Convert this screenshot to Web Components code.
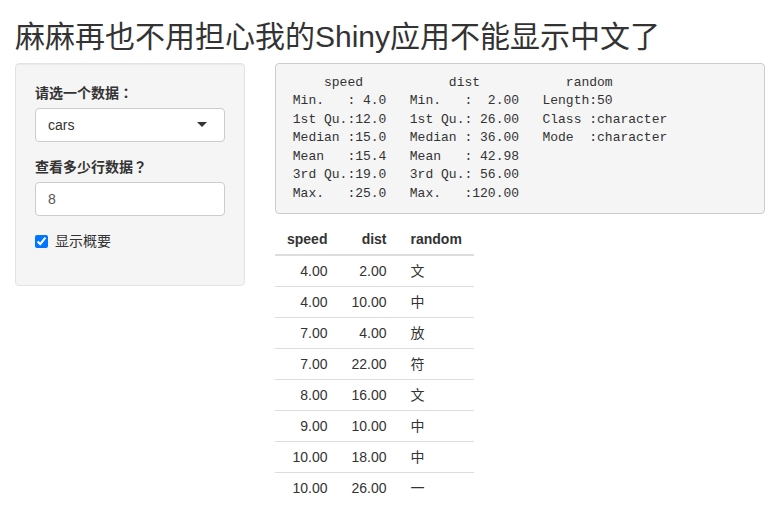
<!DOCTYPE html>
<html lang="zh-CN">
<head>
<meta charset="utf-8">
<title>麻麻再也不用担心我的Shiny应用不能显示中文了</title>
<style>
body { margin: 0; background: #fff; color: #333; font: 14px/20px "Liberation Sans", "Noto Sans CJK SC", sans-serif; }
</style>
</head>
<body>
<shiny-page heading="麻麻再也不用担心我的Shiny应用不能显示中文了">
  <well-panel slot="side">
    <select-field label="请选一个数据："></select-field>
    <number-field label="查看多少行数据？" value="8"></number-field>
    <check-field label="显示概要"></check-field>
  </well-panel>
  <summary-output></summary-output>
  <data-table></data-table>
</shiny-page>
<script>
const control = `
  :host { display: block; margin-bottom: 15px; }
  * { box-sizing: border-box; }
  label { display: block; font-family: "Liberation Sans", "Noto Sans CJK TC", sans-serif; font-feature-settings: "locl" 0; font-weight: 700; margin-bottom: 5px; }
  select, input { display: block; width: 100%; height: 34px; padding: 6px 12px; font: inherit; color: #333; background: #fff; border: 1px solid #ccc; border-radius: 4px; }
`;
function define(name, render) {
  customElements.define(name, class extends HTMLElement {
    constructor() {
      super();
      this.attachShadow({ mode: "open" });
    }
    connectedCallback() {
      this.shadowRoot.innerHTML = render(this);
    }
  });
}

define("shiny-page", el => `
  <style>
    :host { display: block; padding: 20px 0 0; }
    h1 { margin: 0 15px 10px; font-size: 30px; font-weight: 400; line-height: 33px; }
    .row { display: grid; grid-template-columns: minmax(0, 1fr) minmax(0, 2fr); align-items: start; }
    aside, main { padding: 0 15px; }
  </style>
  <h1>${el.getAttribute("heading")}</h1>
  <div class="row"><aside><slot name="side"></slot></aside><main><slot></slot></main></div>`);

define("well-panel", () => `
  <style>
    :host { display: block; padding: 19px; background: #f5f5f5; border: 1px solid #e3e3e3; border-radius: 4px; box-shadow: inset 0 1px 1px rgba(0,0,0,.05); }
  </style>
  <slot></slot>`);

define("select-field", el => `
  <style>${control}
    .box { position: relative; }
    select { appearance: none; cursor: pointer; }
    svg { position: absolute; right: 18px; top: 14px; pointer-events: none; }
  </style>
  <label for="data">${el.getAttribute("label")}</label>
  <div class="box">
    <select id="data"><option>cars</option></select>
    <svg width="10" height="5" viewBox="0 0 10 5" aria-hidden="true"><path d="M0 0h10L5 5z" fill="#333"/></svg>
  </div>`);

define("number-field", el => `
  <style>${control}
    input { color: #555; appearance: textfield; }
  </style>
  <label for="rows">${el.getAttribute("label")}</label>
  <input id="rows" type="number" value="${el.getAttribute("value")}">`);

define("check-field", el => `
  <style>
    :host { display: block; margin-bottom: 15px; }
    label { display: flex; align-items: center; gap: 7px; min-height: 20px; cursor: pointer; }
    input { width: 13px; height: 13px; margin: 0; }
  </style>
  <label><input type="checkbox" checked>${el.getAttribute("label")}</label>`);

define("summary-output", () => `
  <style>
    :host { display: block; margin-bottom: 10px; }
    pre { margin: 0; padding: 10px 9px; font: 13px/1.42 "Liberation Mono", monospace; color: #333; background: #f5f5f5; border: 1px solid #ccc; border-radius: 4px; overflow: hidden; }
  </style>
  <pre>     speed           dist           random         
 Min.   : 4.0   Min.   :  2.00   Length:50         
 1st Qu.:12.0   1st Qu.: 26.00   Class :character  
 Median :15.0   Median : 36.00   Mode  :character  
 Mean   :15.4   Mean   : 42.98                     
 3rd Qu.:19.0   3rd Qu.: 56.00                     
 Max.   :25.0   Max.   :120.00                     </pre>`);

const rows = [
  ["4.00", "2.00", "文"],
  ["4.00", "10.00", "中"],
  ["7.00", "4.00", "放"],
  ["7.00", "22.00", "符"],
  ["8.00", "16.00", "文"],
  ["9.00", "10.00", "中"],
  ["10.00", "18.00", "中"],
  ["10.00", "26.00", "一"]
];
define("data-table", () => `
  <style>
    :host { display: block; }
    table { border-collapse: collapse; }
    th, td { padding: 5px 12px; text-align: right; line-height: 20px; border-top: 1px solid #ddd; }
    th { border-top: 0; border-bottom: 2px solid #ddd; }
    :is(th, td):last-child { text-align: left; }
  </style>
  <table>
    <thead><tr><th>speed</th><th>dist</th><th>random</th></tr></thead>
    <tbody>${rows.map(r => `<tr>${r.map(c => `<td>${c}</td>`).join("")}</tr>`).join("")}</tbody>
  </table>`);
</script>
</body>
</html>
